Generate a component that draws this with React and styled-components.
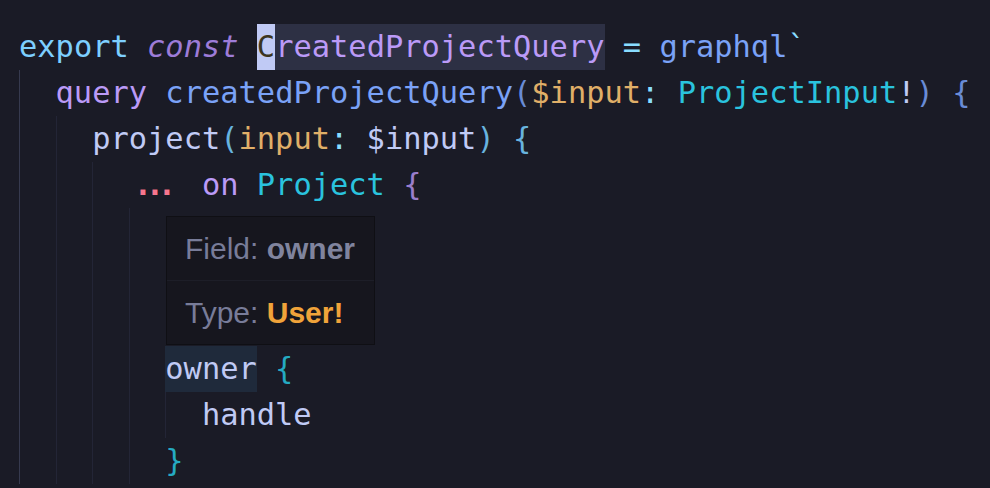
import React from "react";
import styled, { createGlobalStyle } from "styled-components";

const GlobalStyle = createGlobalStyle`
  html, body {
    margin: 0;
    padding: 0;
    background: #1a1b26;
  }
  body {
    width: 990px;
    height: 488px;
    overflow: hidden;
  }
`;

const Editor = styled.div`
  position: relative;
  width: 990px;
  height: 488px;
  box-sizing: border-box;
  padding: 24px 0 0 19px;
  background: #1a1b26;
  font-family: "DejaVu Sans Mono", "Liberation Mono", monospace;
  font-size: 30.4px;
  color: #c0caf5;
  overflow: hidden;
`;

const Line = styled.div`
  height: 46px;
  line-height: 46px;
  white-space: pre;
`;

const Indent = styled.span`
  display: inline-block;
  vertical-align: top;
  width: 2ch;
  height: 46px;
  box-sizing: border-box;
  border-left: 1px solid ${(p) => (p.$active ? "#363a4f" : "#232536")};
`;

const Tok = styled.span`
  color: ${(p) => p.$c || "#c0caf5"};
  font-style: ${(p) => (p.$italic ? "italic" : "normal")};
  ${(p) =>
    p.$bg &&
    `
    display: inline-block;
    vertical-align: top;
    height: 46px;
    background: ${p.$bg};
  `}
`;

const Cursor = styled.span`
  display: inline-block;
  vertical-align: top;
  height: 46px;
  background: #c0caf5;
  color: #3b3520;
`;

const Dots = styled.span`
  display: inline-block;
  vertical-align: top;
  width: 3ch;
  box-sizing: border-box;
  padding-left: 5px;
  letter-spacing: -6.3px;
  color: #f7768e;
  font-weight: bold;
`;

const Tooltip = styled.div`
  position: absolute;
  left: 166px;
  top: 216px;
  width: 209px;
  box-sizing: border-box;
  background: #16161e;
  border: 1px solid #0f0f14;
  font-family: "Liberation Sans", Arial, sans-serif;
  font-size: 30px;
  color: #787c99;
`;

const TipRow = styled.div`
  height: 63px;
  line-height: 63px;
  padding-left: 18px;
  white-space: nowrap;
  & + & {
    border-top: 1px solid #1d1e28;
  }
`;

const TipValue = styled.b`
  font-weight: bold;
  color: ${(p) => p.$c || "#80849e"};
`;

const C = {
  keyword: "#7dcfff",
  storage: "#9d7cd8",
  variable: "#bb9af7",
  op: "#89ddff",
  func: "#7aa2f7",
  arg: "#e0af68",
  type: "#2ac3de",
  text: "#c0caf5",
  b1: "#698cd6",
  b2: "#68b3de",
  b3: "#9a7ecc",
  b4: "#25aac2",
};

function Guides({ n }) {
  return Array.from({ length: n }).map((_, i) => (
    <Indent key={i} $active={i === 0} />
  ));
}

export default function App() {
  return (
    <>
      <GlobalStyle />
      <Editor>
        <Line>
          <Tok $c={C.keyword}>export</Tok>{" "}
          <Tok $c={C.storage} $italic>const</Tok>{" "}
          <Cursor>C</Cursor>
          <Tok $c={C.variable} $bg="#2d3044">reatedProjectQuery</Tok>{" "}
          <Tok $c={C.op}>=</Tok>{" "}
          <Tok $c={C.func}>graphql</Tok>
          <Tok $c={C.op}>`</Tok>
        </Line>
        <Line>
          <Guides n={1} />
          <Tok $c={C.variable}>query</Tok>{" "}
          <Tok $c={C.func}>createdProjectQuery</Tok>
          <Tok $c={C.b1}>(</Tok>
          <Tok $c={C.arg}>$input</Tok>
          <Tok $c={C.op}>:</Tok>{" "}
          <Tok $c={C.type}>ProjectInput</Tok>
          <Tok $c={C.text}>!</Tok>
          <Tok $c={C.b1}>)</Tok>{" "}
          <Tok $c={C.b1}>{"{"}</Tok>
        </Line>
        <Line>
          <Guides n={2} />
          <Tok>project</Tok>
          <Tok $c={C.b2}>(</Tok>
          <Tok $c={C.arg}>input</Tok>
          <Tok $c={C.op}>:</Tok>{" "}
          <Tok>$input</Tok>
          <Tok $c={C.b2}>)</Tok>{" "}
          <Tok $c={C.b2}>{"{"}</Tok>
        </Line>
        <Line>
          <Guides n={3} />
          <Dots>...</Dots>{" "}
          <Tok $c={C.variable}>on</Tok>{" "}
          <Tok $c={C.type}>Project</Tok>{" "}
          <Tok $c={C.b3}>{"{"}</Tok>
        </Line>
        <Line>
          <Guides n={4} />
        </Line>
        <Line>
          <Guides n={4} />
        </Line>
        <Line>
          <Guides n={4} />
        </Line>
        <Line>
          <Guides n={4} />
          <Tok $bg="#1f2a3b">owner</Tok>{" "}
          <Tok $c={C.b4}>{"{"}</Tok>
        </Line>
        <Line>
          <Guides n={5} />
          <Tok>handle</Tok>
        </Line>
        <Line>
          <Guides n={4} />
          <Tok $c={C.b4}>{"}"}</Tok>
        </Line>
        <Tooltip>
          <TipRow>
            Field: <TipValue>owner</TipValue>
          </TipRow>
          <TipRow>
            Type: <TipValue $c="#f0a33a">User!</TipValue>
          </TipRow>
        </Tooltip>
      </Editor>
    </>
  );
}
